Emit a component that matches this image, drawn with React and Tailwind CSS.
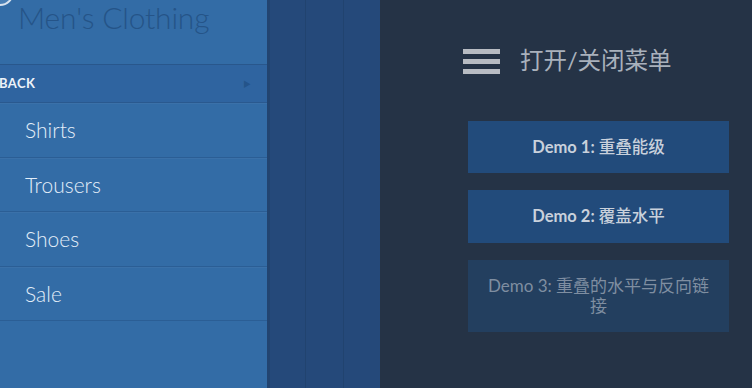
export default function App() {
  const font = { fontFamily: "Lato, 'Noto Sans CJK SC', sans-serif" };
  return (
    <div className="w-[752px] h-[388px] flex overflow-hidden bg-[#253346]" style={font}>
      {/* left menu panel */}
      <div className="relative w-[267px] h-full bg-[#336ca6] flex flex-col shrink-0">
        <div className="absolute left-[-14px] top-[-22px] w-[28px] h-[28px] rounded-full border-2 border-[#d8e2ee] bg-[#4a7fb5]" />
        <div className="h-[64px] pl-[18px] text-[30px] font-light leading-[34px] text-[#255488] tracking-[-0.2px]">
          Men's Clothing
        </div>
        <div className="h-[39px] bg-[#2f64a0] shadow-[inset_0_1px_0_rgba(0,0,0,0.12),inset_0_-1px_0_rgba(0,0,0,0.1)] flex items-center justify-between pr-[16px]">
          <span className="text-[13px] font-bold text-[#eef3f9] tracking-[0.4px] ml-[-1px]">BACK</span>
          <span className="text-[8px] text-[#24548a]">▶</span>
        </div>
        {["Shirts", "Trousers", "Shoes", "Sale"].map((t) => (
          <div
            key={t}
            className="h-[54.5px] flex items-center pl-[25px] text-[21px] font-light text-[#e3eef9] border-b border-[#2b5e95] shadow-[inset_0_1px_0_rgba(255,255,255,0.04)]"
          >
            {t}
          </div>
        ))}
      </div>
      {/* stacked level strips */}
      <div className="flex h-full shrink-0">
        <div className="w-[38px] h-full bg-[#25497a] border-l-[3px] border-[#224470]" />
        <div className="w-[38px] h-full bg-[#25497a] border-l border-[#21436f]" />
        <div className="w-[37px] h-full bg-[#25497a] border-l border-[#21436f]" />
      </div>
      {/* content */}
      <div className="flex-1 h-full flex flex-col pl-[83px]">
        <div className="flex items-center mt-[46px] h-[30px]">
          <div className="flex flex-col gap-[5px] w-[37px]">
            <div className="h-[5px] bg-[#b8bcc3]" />
            <div className="h-[5px] bg-[#b8bcc3]" />
            <div className="h-[5px] bg-[#b8bcc3]" />
          </div>
          <span className="ml-[20px] text-[23.5px] text-[#a9b1bc] leading-none">打开/关闭菜单</span>
        </div>
        <div className="ml-[5px] mt-[45px] w-[261px] flex flex-col gap-[17px]">
          <div className="h-[52px] bg-[#224b7b] flex items-center justify-center text-[16.5px] font-bold text-[#c9d1dc]">
            <span>Demo 1: </span>
            <span className="font-medium ml-[4px]">重叠能级</span>
          </div>
          <div className="h-[53px] bg-[#224b7b] flex items-center justify-center text-[16.5px] font-bold text-[#c9d1dc]">
            <span>Demo 2: </span>
            <span className="font-medium ml-[4px]">覆盖水平</span>
          </div>
          <div className="h-[72px] bg-[#233f5f] flex flex-col items-center justify-center text-[17px] leading-[20px] text-[#7f8ea1] text-center">
            <span>Demo 3: 重叠的水平与反向链</span>
            <span>接</span>
          </div>
        </div>
      </div>
    </div>
  );
}
